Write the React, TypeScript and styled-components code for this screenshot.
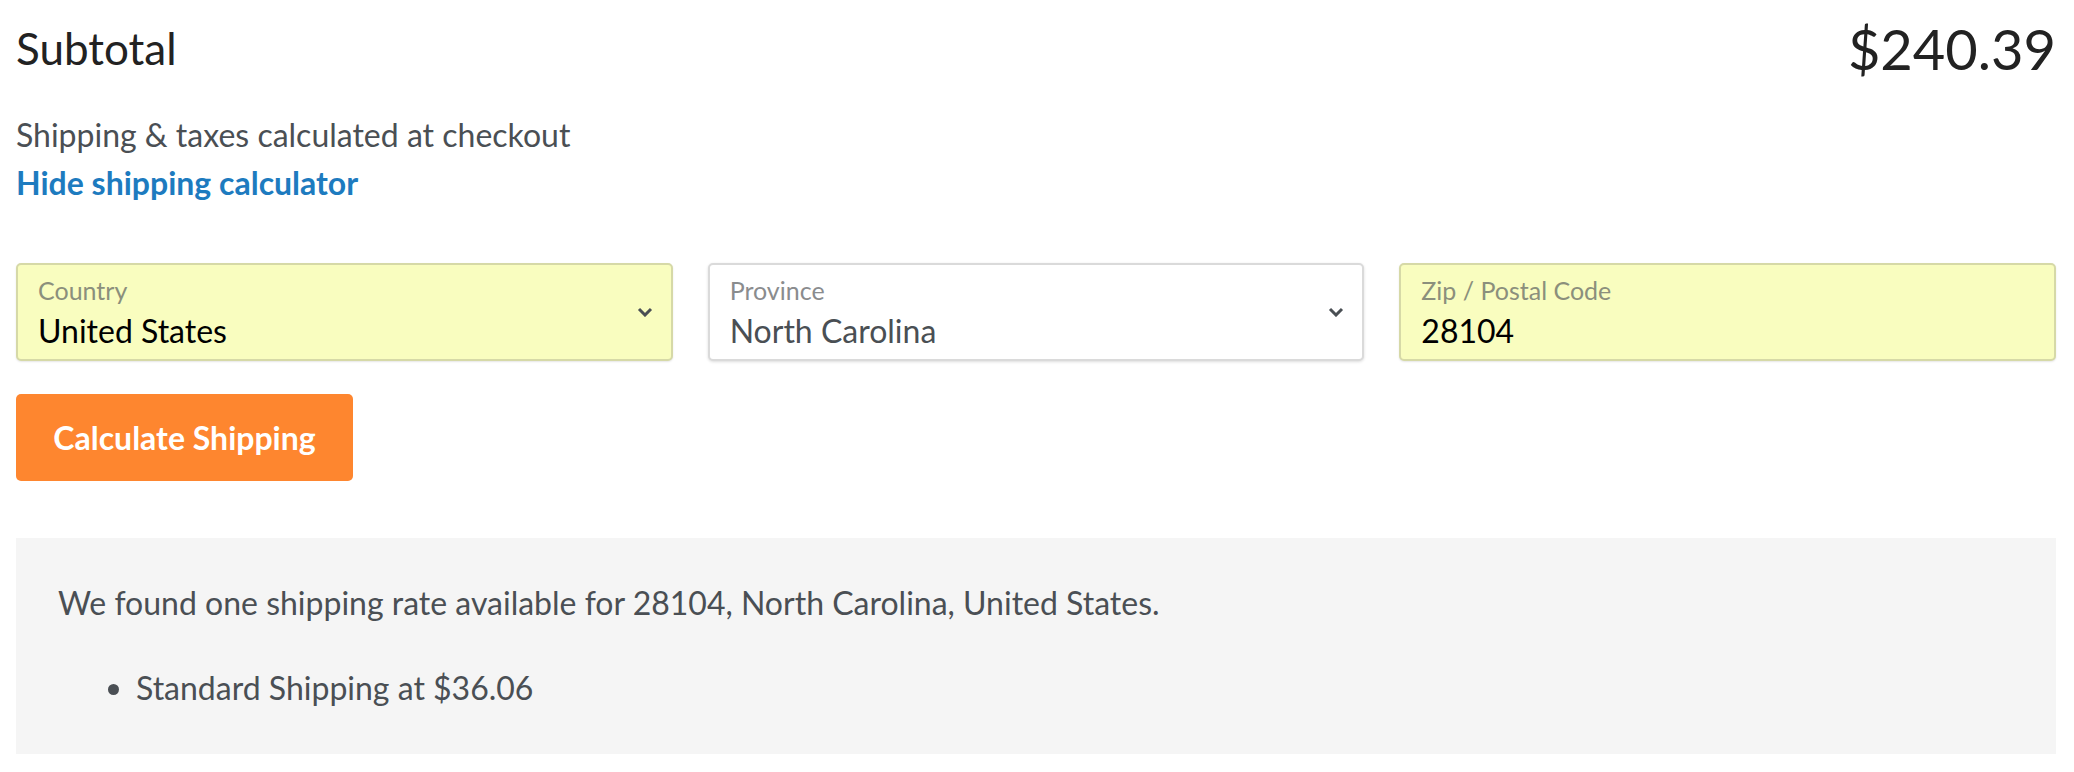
import React from "react";
import styled, { createGlobalStyle } from "styled-components";

const GlobalStyle = createGlobalStyle`
  html, body {
    margin: 0;
    padding: 0;
    background: #ffffff;
  }
  body {
    font-family: Lato, "Open Sans", sans-serif;
    -webkit-font-smoothing: antialiased;
  }
`;

const Page = styled.div`
  padding: 15px 18px 18px 16px;
  color: #4a4f54;
`;

const TotalRow = styled.div`
  display: flex;
  align-items: center;
  justify-content: space-between;
  height: 67px;
`;

const TotalLabel = styled.div`
  font-size: 44px;
  line-height: 1.2;
  color: #222222;
`;

const TotalPrice = styled.div`
  font-size: 56px;
  line-height: 1.2;
  color: #222222;
`;

const Note = styled.p`
  margin: 29px 0 0;
  font-size: 32px;
  line-height: 48px;
`;

const ToggleLink = styled.a`
  display: block;
  font-size: 32px;
  line-height: 48px;
  font-weight: 700;
  color: #1d7bbf;
  text-decoration: none;
  cursor: pointer;
`;

const FieldGrid = styled.div`
  display: grid;
  grid-template-columns: repeat(3, 1fr);
  gap: 35px;
  margin-top: 56px;
`;

const Field = styled.div<{ $filled?: boolean }>`
  display: flex;
  align-items: center;
  height: 98px;
  box-sizing: border-box;
  padding: 0 18px 0 20px;
  border-radius: 5px;
  border: 2px solid ${(p) => (p.$filled ? "#d6d9a7" : "#dadada")};
  background: ${(p) => (p.$filled ? "#f9fdbf" : "#ffffff")};
  box-shadow: ${(p) => (p.$filled ? "0 1px 2px rgba(0,0,0,0.10)" : "0 1px 3px rgba(0,0,0,0.14)")};
`;

const FieldBody = styled.div`
  flex: 1;
  display: flex;
  flex-direction: column;
  gap: 11px;
  padding-top: 1px;
`;

const FieldLabel = styled.span<{ $filled?: boolean }>`
  font-size: 25px;
  line-height: 26px;
  color: ${(p) => (p.$filled ? "#8b8f7c" : "#8a8c8e")};
`;

const FieldValue = styled.span<{ $filled?: boolean }>`
  font-size: 32px;
  line-height: 34px;
  color: ${(p) => (p.$filled ? "#000000" : "#4a4f54")};
`;

const Chevron = styled.svg`
  width: 16px;
  height: 10px;
  flex-shrink: 0;
`;

const CalcButton = styled.button`
  display: block;
  margin-top: 33px;
  width: 337px;
  height: 87px;
  border: none;
  border-radius: 5px;
  background: #fe862f;
  color: #ffffff;
  font-family: Lato, "Open Sans", sans-serif;
  font-size: 32px;
  font-weight: 700;
  cursor: pointer;
`;

const ResultBox = styled.div`
  margin-top: 57px;
  background: #f5f5f5;
  padding: 44px 42px 45px;
`;

const ResultText = styled.p`
  margin: 0;
  font-size: 32px;
  line-height: 42px;
`;

const RateList = styled.ul`
  margin: 43px 0 0;
  padding-left: 78px;
  font-size: 32px;
  line-height: 42px;
`;

const ChevronIcon = () => (
  <Chevron viewBox="0 0 16 10">
    <path d="M2 2 L8 8 L14 2" fill="none" stroke="#4a4f54" strokeWidth="3" />
  </Chevron>
);

type FieldProps = { label: string; value: string; filled?: boolean; select?: boolean };

const FormField = ({ label, value, filled, select }: FieldProps) => (
  <Field $filled={filled}>
    <FieldBody>
      <FieldLabel $filled={filled}>{label}</FieldLabel>
      <FieldValue $filled={filled}>{value}</FieldValue>
    </FieldBody>
    {select && <ChevronIcon />}
  </Field>
);

export default function App() {
  return (
    <Page>
      <GlobalStyle />
      <TotalRow>
        <TotalLabel>Subtotal</TotalLabel>
        <TotalPrice>$240.39</TotalPrice>
      </TotalRow>
      <Note>Shipping &amp; taxes calculated at checkout</Note>
      <ToggleLink>Hide shipping calculator</ToggleLink>
      <FieldGrid>
        <FormField label="Country" value="United States" filled select />
        <FormField label="Province" value="North Carolina" select />
        <FormField label="Zip / Postal Code" value="28104" filled />
      </FieldGrid>
      <CalcButton>Calculate Shipping</CalcButton>
      <ResultBox>
        <ResultText>We found one shipping rate available for 28104, North Carolina, United States.</ResultText>
        <RateList>
          <li>Standard Shipping at $36.06</li>
        </RateList>
      </ResultBox>
    </Page>
  );
}
